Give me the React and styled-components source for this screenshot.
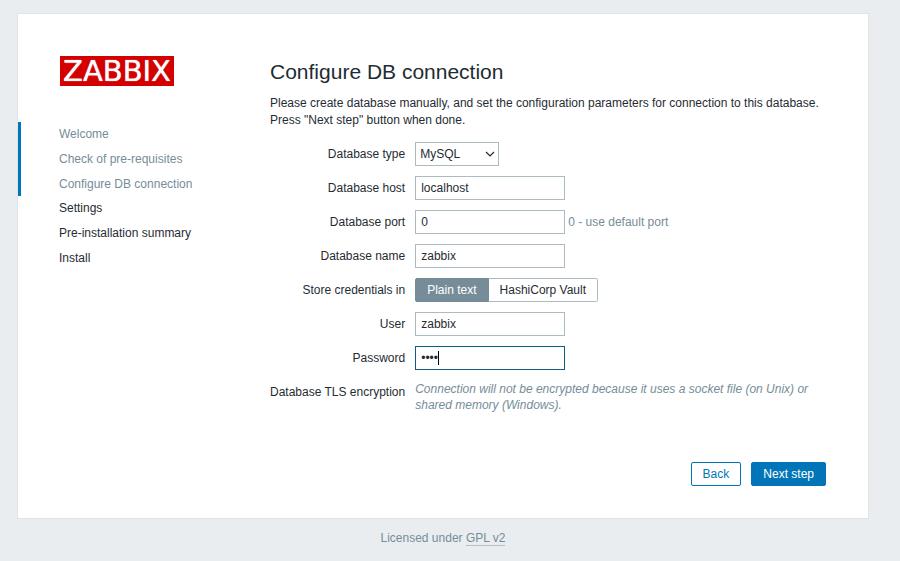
import React, { useState } from "react";
import styled, { createGlobalStyle, css } from "styled-components";

const GlobalStyle = createGlobalStyle`
  *, *::before, *::after { box-sizing: border-box; }
  body {
    margin: 0;
    background: #e9edf0;
    color: #1f2c33;
    font: 12px/16px "Liberation Sans", Arial, sans-serif;
  }
  button, input, select { font: inherit; color: inherit; }
`;

const Page = styled.div`
  padding: 13px 31px 15px 17px;
`;

const Card = styled.main`
  display: flex;
  background: #fff;
  border: 1px solid #dfe4e7;
`;

const Sidebar = styled.aside`
  flex: 0 0 252px;
  padding-top: 42px;
`;

const Logo = styled.div`
  width: 114px;
  margin: 0 0 36px 42px;
  background: #d40000;
  color: #fff;
  font: 29px/30px "DejaVu Sans", sans-serif;
  text-align: center;
  text-shadow: 0 0 1px #fff;
`;

const Steps = styled.ol`
  display: flex;
  flex-direction: column;
  gap: 10px;
  margin: 0;
  padding: 5px 0 4px 38px;
  list-style: none;
  line-height: 15px;
  border-left: 3px solid ${(p) => (p.$reached ? "#0275b8" : "transparent")};
  color: ${(p) => (p.$reached ? "#768d99" : "inherit")};
`;

const Form = styled.form`
  flex: 1;
  min-width: 0;
  padding: 45px 42px 32px 0;
`;

const Title = styled.h1`
  margin: 0 0 10px;
  font-size: 21px;
  line-height: 26px;
  font-weight: 400;
`;

const Intro = styled.p`
  margin: 0 0 13px;
  line-height: 17px;
`;

const Fields = styled.div`
  display: grid;
  grid-template-columns: max-content 1fr;
  gap: 10px;
`;

const labelStyle = css`
  line-height: 24px;
  text-align: right;
`;

const Label = styled.label`
  ${labelStyle}
`;

const LabelText = styled.span`
  ${labelStyle}
`;

const Control = styled.div`
  position: relative;
  display: flex;
  align-items: center;
  gap: 3px;
`;

const TextInput = styled.input`
  width: 150px;
  height: 24px;
  padding: 0 5px;
  border: 1px solid #acbbc2;
  border-radius: 0;
  background: #fff;
  outline: 0;

  &:focus {
    border-color: #0b5f80;
  }
`;

const PasswordInput = styled(TextInput)`
  caret-color: ${(p) => (p.$ownCaret ? "transparent" : "auto")};
`;

const Caret = styled.span`
  position: absolute;
  left: 23px;
  width: 1px;
  height: 14px;
  background: #000;
  pointer-events: none;
`;

const SelectBox = styled.div`
  display: grid;
  align-items: center;
  width: 84px;

  > * {
    grid-area: 1 / 1;
  }

  svg {
    justify-self: end;
    margin-right: 4px;
    pointer-events: none;
  }
`;

const Select = styled.select`
  appearance: none;
  width: 100%;
  height: 24px;
  padding: 0 20px 0 4px;
  border: 1px solid #acbbc2;
  border-radius: 0;
  background: #fff;
  outline: 0;
`;

const Note = styled.span`
  color: #768d99;
`;

const Hint = styled.em`
  padding-top: 1px;
  color: #768d99;
`;

const Segments = styled.div`
  display: flex;
`;

const Segment = styled.label`
  padding: 0 11px;
  border: 1px solid #acbbc2;
  line-height: 22px;
  cursor: pointer;

  &:first-child {
    border-radius: 2px 0 0 2px;
  }

  &:last-child {
    border-radius: 0 2px 2px 0;
    border-left: 0;
  }

  &:has(input:checked) {
    background: #768d99;
    border-color: #768d99;
    color: #fff;
  }

  input {
    appearance: none;
    position: absolute;
    margin: 0;
  }
`;

const Actions = styled.div`
  display: flex;
  justify-content: flex-end;
  gap: 10px;
  margin-top: 49px;
`;

const Button = styled.button`
  height: 24px;
  padding: 0 11px;
  border: 1px solid #0275b8;
  border-radius: 2px;
  background: ${(p) => (p.$primary ? "#0275b8" : "#fff")};
  color: ${(p) => (p.$primary ? "#fff" : "#0275b8")};
  cursor: pointer;
`;

const Footer = styled.footer`
  margin-top: 11px;
  color: #768d99;
  text-align: center;
`;

const FooterLink = styled.a`
  color: inherit;
  text-decoration: none;
  border-bottom: 1px solid #b5c1c8;
`;

const reachedSteps = ["Welcome", "Check of pre-requisites", "Configure DB connection"];
const nextSteps = ["Settings", "Pre-installation summary", "Install"];
const stores = ["Plain text", "HashiCorp Vault"];

function StepList({ steps, reached, start }) {
  return (
    <Steps $reached={reached} start={start}>
      {steps.map((name) => (
        <li key={name}>{name}</li>
      ))}
    </Steps>
  );
}

function TextRow({ id, label, note, ...rest }) {
  return (
    <>
      <Label htmlFor={id}>{label}</Label>
      <Control>
        <TextInput id={id} {...rest} />
        {note && <Note>{note}</Note>}
      </Control>
    </>
  );
}

function PasswordRow() {
  const [pristine, setPristine] = useState(true);
  const touch = () => setPristine(false);

  return (
    <>
      <Label htmlFor="password">Password</Label>
      <Control>
        <PasswordInput
          id="password"
          type="password"
          defaultValue="pass"
          autoFocus
          $ownCaret={pristine}
          onKeyDown={touch}
          onPointerDown={touch}
          onBlur={touch}
        />
        {pristine && <Caret />}
      </Control>
    </>
  );
}

export default function App() {
  const [store, setStore] = useState(stores[0]);

  return (
    <Page>
      <GlobalStyle />
      <Card>
        <Sidebar>
          <Logo>ZABBIX</Logo>
          <nav>
            <StepList steps={reachedSteps} reached start={1} />
            <StepList steps={nextSteps} start={4} />
          </nav>
        </Sidebar>
        <Form onSubmit={(e) => e.preventDefault()}>
          <Title>Configure DB connection</Title>
          <Intro>
            Please create database manually, and set the configuration parameters for connection to
            this database. Press "Next step" button when done.
          </Intro>
          <Fields>
            <Label htmlFor="type">Database type</Label>
            <Control>
              <SelectBox>
                <Select id="type" defaultValue="MySQL">
                  <option>MySQL</option>
                  <option>PostgreSQL</option>
                </Select>
                <svg width="10" height="8" viewBox="0 0 10 8" fill="none" aria-hidden="true">
                  <path d="M1 2l4 4 4-4" stroke="#1f2c33" strokeWidth="1.2" />
                </svg>
              </SelectBox>
            </Control>
            <TextRow id="host" label="Database host" defaultValue="localhost" />
            <TextRow id="port" label="Database port" defaultValue="0" note="0 - use default port" />
            <TextRow id="name" label="Database name" defaultValue="zabbix" />
            <LabelText id="store-label">Store credentials in</LabelText>
            <Segments role="radiogroup" aria-labelledby="store-label">
              {stores.map((name) => (
                <Segment key={name}>
                  <input
                    type="radio"
                    name="store"
                    checked={store === name}
                    onChange={() => setStore(name)}
                  />
                  {name}
                </Segment>
              ))}
            </Segments>
            <TextRow id="user" label="User" defaultValue="zabbix" />
            <PasswordRow />
            <LabelText>Database TLS encryption</LabelText>
            <Hint>
              Connection will not be encrypted because it uses a socket file (on Unix) or shared
              memory (Windows).
            </Hint>
          </Fields>
          <Actions>
            <Button type="button">Back</Button>
            <Button type="submit" $primary>
              Next step
            </Button>
          </Actions>
        </Form>
      </Card>
      <Footer>
        Licensed under <FooterLink href="#license">GPL v2</FooterLink>
      </Footer>
    </Page>
  );
}
